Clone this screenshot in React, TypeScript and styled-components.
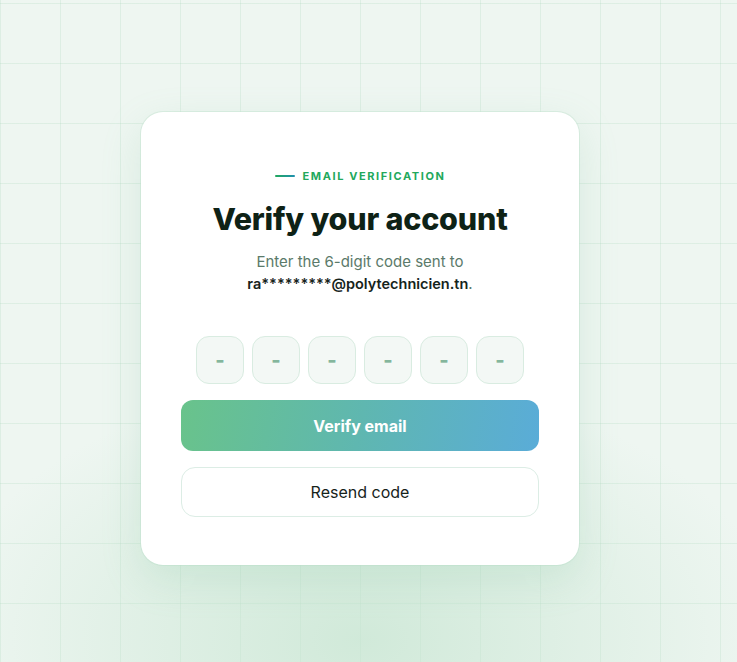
import React, { useState } from 'react';
import styled, { createGlobalStyle } from 'styled-components';

const GlobalStyle = createGlobalStyle`
  html, body {
    margin: 0;
    padding: 0;
    height: 100%;
  }
  body {
    font-family: Inter, "Noto Sans", sans-serif;
    background-color: #eef6f1;
    background-image:
      radial-gradient(ellipse 420px 260px at 360px 640px, rgba(196, 228, 207, 0.7), rgba(196, 228, 207, 0) 100%),
      linear-gradient(to right, rgba(160, 210, 180, 0.22) 1px, transparent 1px),
      linear-gradient(to bottom, rgba(160, 210, 180, 0.22) 1px, transparent 1px);
    background-size: 100% 100%, 60px 60px, 60px 60px;
    background-position: 0 0, 0 3px, 0 3px;
    background-repeat: no-repeat, repeat, repeat;
  }
  #root {
    height: 100%;
  }
`;

const Page = styled.div`
  min-height: 662px;
  display: flex;
  justify-content: center;
  align-items: flex-start;
  padding: 112px 17px 0 0;
  box-sizing: border-box;
`;

const Card = styled.div`
  width: 438px;
  box-sizing: border-box;
  background: #fff;
  border-radius: 22px;
  padding: 57px 40px 48px;
  display: flex;
  flex-direction: column;
  align-items: center;
  box-shadow: 0 14px 40px rgba(120, 190, 150, 0.2), 0 0 0 1px rgba(200, 230, 212, 0.5);
`;

const Eyebrow = styled.div`
  display: flex;
  align-items: center;
  gap: 8px;
  font-size: 11px;
  font-weight: 700;
  letter-spacing: 1.6px;
  color: #22a85c;
  line-height: 14px;
`;

const EyebrowLine = styled.span`
  width: 20px;
  height: 2px;
  border-radius: 1px;
  background: linear-gradient(90deg, #22a85c, #1f8fb0);
`;

const Title = styled.h1`
  margin: 18px 0 0;
  font-size: 30.5px;
  font-weight: 800;
  letter-spacing: -0.2px;
  line-height: 36px;
  color: #0e2216;
`;

const Subtitle = styled.p`
  margin: 14px 0 0;
  font-size: 15px;
  line-height: 22px;
  color: #5b7a6a;
  text-align: center;
`;

const Email = styled.strong`
  font-size: 14.5px;
  font-weight: 600;
  color: #16231b;
`;

const CodeRow = styled.div`
  display: flex;
  gap: 8px;
  margin-top: 41px;
`;

const CodeBox = styled.input`
  width: 48px;
  height: 48px;
  box-sizing: border-box;
  border: 1px solid #d9ece1;
  border-radius: 13px;
  background: #f3f8f5;
  text-align: center;
  font-family: inherit;
  font-size: 20px;
  font-weight: 800;
  color: #1a2a20;
  outline: none;

  &::placeholder {
    color: #84b69c;
    font-weight: 800;
  }
`;

const PrimaryButton = styled.button`
  width: 100%;
  height: 51px;
  margin-top: 16px;
  border: none;
  border-radius: 12px;
  background: linear-gradient(100deg, #69c38b 0%, #5fb7b0 50%, #5aacd8 100%);
  color: #fff;
  font-family: inherit;
  font-size: 16px;
  font-weight: 700;
  cursor: pointer;
`;

const SecondaryButton = styled.button`
  width: 100%;
  height: 50px;
  margin-top: 16px;
  border: 1px solid #dcede5;
  border-radius: 14px;
  background: #fff;
  color: #16231b;
  font-family: inherit;
  font-size: 16px;
  font-weight: 400;
  cursor: pointer;
`;

const App: React.FC = () => {
  const [code, setCode] = useState<string[]>(['', '', '', '', '', '']);

  const handleChange = (index: number, value: string) => {
    const next = [...code];
    next[index] = value.slice(-1);
    setCode(next);
  };

  return (
    <>
      <GlobalStyle />
      <Page>
        <Card>
          <Eyebrow>
            <EyebrowLine />
            EMAIL VERIFICATION
          </Eyebrow>
          <Title>Verify your account</Title>
          <Subtitle>
            Enter the 6-digit code sent to
            <br />
            <Email>ra*********@polytechnicien.tn</Email>.
          </Subtitle>
          <CodeRow>
            {code.map((digit, i) => (
              <CodeBox
                key={i}
                value={digit}
                placeholder="-"
                maxLength={1}
                onChange={(e) => handleChange(i, e.target.value)}
              />
            ))}
          </CodeRow>
          <PrimaryButton type="button">Verify email</PrimaryButton>
          <SecondaryButton type="button">Resend code</SecondaryButton>
        </Card>
      </Page>
    </>
  );
};

export default App;
